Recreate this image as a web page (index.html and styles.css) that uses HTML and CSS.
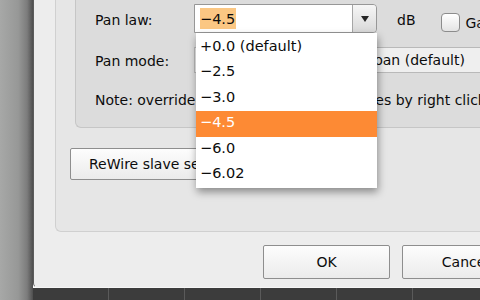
FILE: index.html
```html
<!DOCTYPE html>
<html lang="en">
  <head>
    <meta charset="UTF-8" />
    <meta name="viewport" content="width=device-width, initial-scale=1.0" />
    <title>Project Settings</title>
    <link rel="stylesheet" href="styles.css">
  </head>
  <body>
    <div class="desk">
      <div class="backdrop"></div>

      <div class="window">
        <div class="dialog">
          <div class="panel">
            <div class="group">
              <div class="row row-law">
                <span class="label">Pan law:</span>
                <div class="combo">
                  <div class="combo-field"><span class="sel">&minus;4.5</span></div>
                  <div class="combo-btn">
                    <svg width="8" height="6" viewBox="0 0 8 6"><polygon points="0,0 8,0 4,6" fill="#262626" /></svg>
                  </div>
                  <ul class="menu">
                    <li>+0.0 (default)</li>
                    <li>&minus;2.5</li>
                    <li>&minus;3.0</li>
                    <li class="active">&minus;4.5</li>
                    <li>&minus;6.0</li>
                    <li>&minus;6.02</li>
                  </ul>
                </div>
                <span class="unit">dB</span>
                <label class="check"><span class="box"></span>Gain compensation</label>
              </div>

              <div class="row row-mode">
                <span class="label">Pan mode:</span>
                <div class="popup">Stereo balance / mono pan (default)</div>
              </div>

              <p class="note">Note: override track pan laws, plus modes by right clicking the pan knob</p>
            </div>

            <button class="btn rewire">ReWire slave settings...</button>
          </div>

          <div class="footer">
            <button class="btn">OK</button>
            <button class="btn">Cancel</button>
          </div>
        </div>
        <div class="taskbar"></div>
      </div>
    </div>
  </body>
</html>
```

FILE: styles.css
```css
html,
body {
  margin: 0;
  width: 480px;
  height: 300px;
  overflow: hidden;
}
body {
  font-family: "DejaVu Sans", Verdana, sans-serif;
  font-size: 14px;
  color: #0c0c0c;
}
.desk {
  display: flex;
  height: 300px;
}
.backdrop {
  flex: none;
  width: 33px;
  background: linear-gradient(to right, #a7a8a7 0%, #979897 55%, #7c7c7c 82%, #4e4e4e 100%);
}
.window {
  flex: none;
  width: 600px;
  display: flex;
  flex-direction: column;
}
.dialog {
  height: 288px;
  box-sizing: border-box;
  background: #ededed;
  border-left: 1px solid #5c5c5c;
  border-bottom: 1px solid #f6f6f6;
  border-bottom-left-radius: 5px;
}
.taskbar {
  flex: 1;
  background-color: #3c3c3c;
  background-image: linear-gradient(to right, #5a5a5a 0, #5a5a5a 1px, transparent 1px);
  background-size: 76px 100%;
  background-position: -1px 0;
}

/* tab page */
.panel {
  margin-left: 21px;
  height: 232px;
  box-sizing: border-box;
  background: #e6e6e6;
  border-left: 1px solid #d0d0d0;
  border-bottom: 1px solid #d0d0d0;
  border-bottom-left-radius: 6px;
}
.group {
  margin-left: 19px;
  height: 128px;
  box-sizing: border-box;
  padding-left: 19px;
  padding-top: 4px;
  background: #dcdcdc;
  border-left: 1px solid #c6c6c6;
  border-bottom: 1px solid #c6c6c6;
  border-bottom-left-radius: 6px;
}
.row {
  display: flex;
  align-items: flex-start;
}
.label {
  flex: none;
  width: 99px;
  white-space: nowrap;
}
.row-law {
  height: 29px;
}
.row-law .label,
.unit {
  margin-top: 8px;
}

/* pan law combo */
.combo {
  position: relative;
  flex: none;
  display: flex;
  width: 183px;
  height: 29px;
  box-sizing: border-box;
  border: 1px solid #979797;
  border-radius: 0 4px 4px 0;
}
.combo-field {
  flex: 1;
  background: #fff;
  padding: 3px 0 0 5px;
}
.sel {
  display: inline-block;
  padding-top: 2px;
  line-height: 19px;
  padding-right: 1px;
  font-size: 14.5px;
  background: #fbc783;
}
.combo-btn {
  flex: none;
  width: 23px;
  display: flex;
  align-items: center;
  justify-content: center;
  border-left: 1px solid #a6a6a6;
  border-radius: 0 3px 3px 0;
  background: linear-gradient(#f6f6f6, #d9d9d9);
}
.menu {
  position: absolute;
  top: 28px;
  left: 1px;
  z-index: 2;
  width: 181px;
  margin: 0;
  padding: 1.5px 0 0;
  list-style: none;
  background: #fff;
  box-shadow: 1px 4px 8px rgba(0, 0, 0, 0.4);
  font-size: 14.5px;
}
.menu li {
  height: 25.5px;
  box-sizing: border-box;
  padding: 0 0 2.5px 4px;
  line-height: 23px;
  white-space: nowrap;
}
.menu li.active {
  background: #fd8a34;
  color: #fff;
}
.unit {
  margin-left: 20px;
}
.check {
  display: flex;
  gap: 6px;
  margin-left: 25px;
  margin-top: 9px;
  white-space: nowrap;
  line-height: 20px;
}
.box {
  flex: none;
  width: 19px;
  height: 19px;
  box-sizing: border-box;
  border: 1px solid #8c8c8c;
  border-radius: 4px;
  background: linear-gradient(#ffffff, #e4e4e4);
}

/* pan mode */
.row-mode {
  margin-top: 14px;
  height: 26px;
}
.row-mode .label {
  margin-top: 6px;
}
.popup {
  flex: 1;
  height: 26px;
  box-sizing: border-box;
  padding: 4px 0 0 16px;
  background: #efefef;
  border: 1px solid #b9b9b9;
  border-right: none;
  white-space: nowrap;
}
.note {
  margin: 19px 0 0;
  white-space: nowrap;
}

/* buttons */
.btn {
  font-family: inherit;
  font-size: 14px;
  color: #0c0c0c;
  box-sizing: border-box;
  height: 34px;
  border: 1px solid #8e8e8e;
  border-radius: 2px;
  background: linear-gradient(#fdfdfd, #ebebeb);
  padding: 0;
  cursor: pointer;
}
.rewire {
  display: block;
  margin: 20px 0 0 14px;
  height: 32px;
  width: 210px;
  text-align: left;
  padding-left: 18px;
}
.footer {
  display: flex;
  gap: 12px;
  padding: 13px 0 0 229px;
}
.footer .btn {
  width: 127px;
}
```
